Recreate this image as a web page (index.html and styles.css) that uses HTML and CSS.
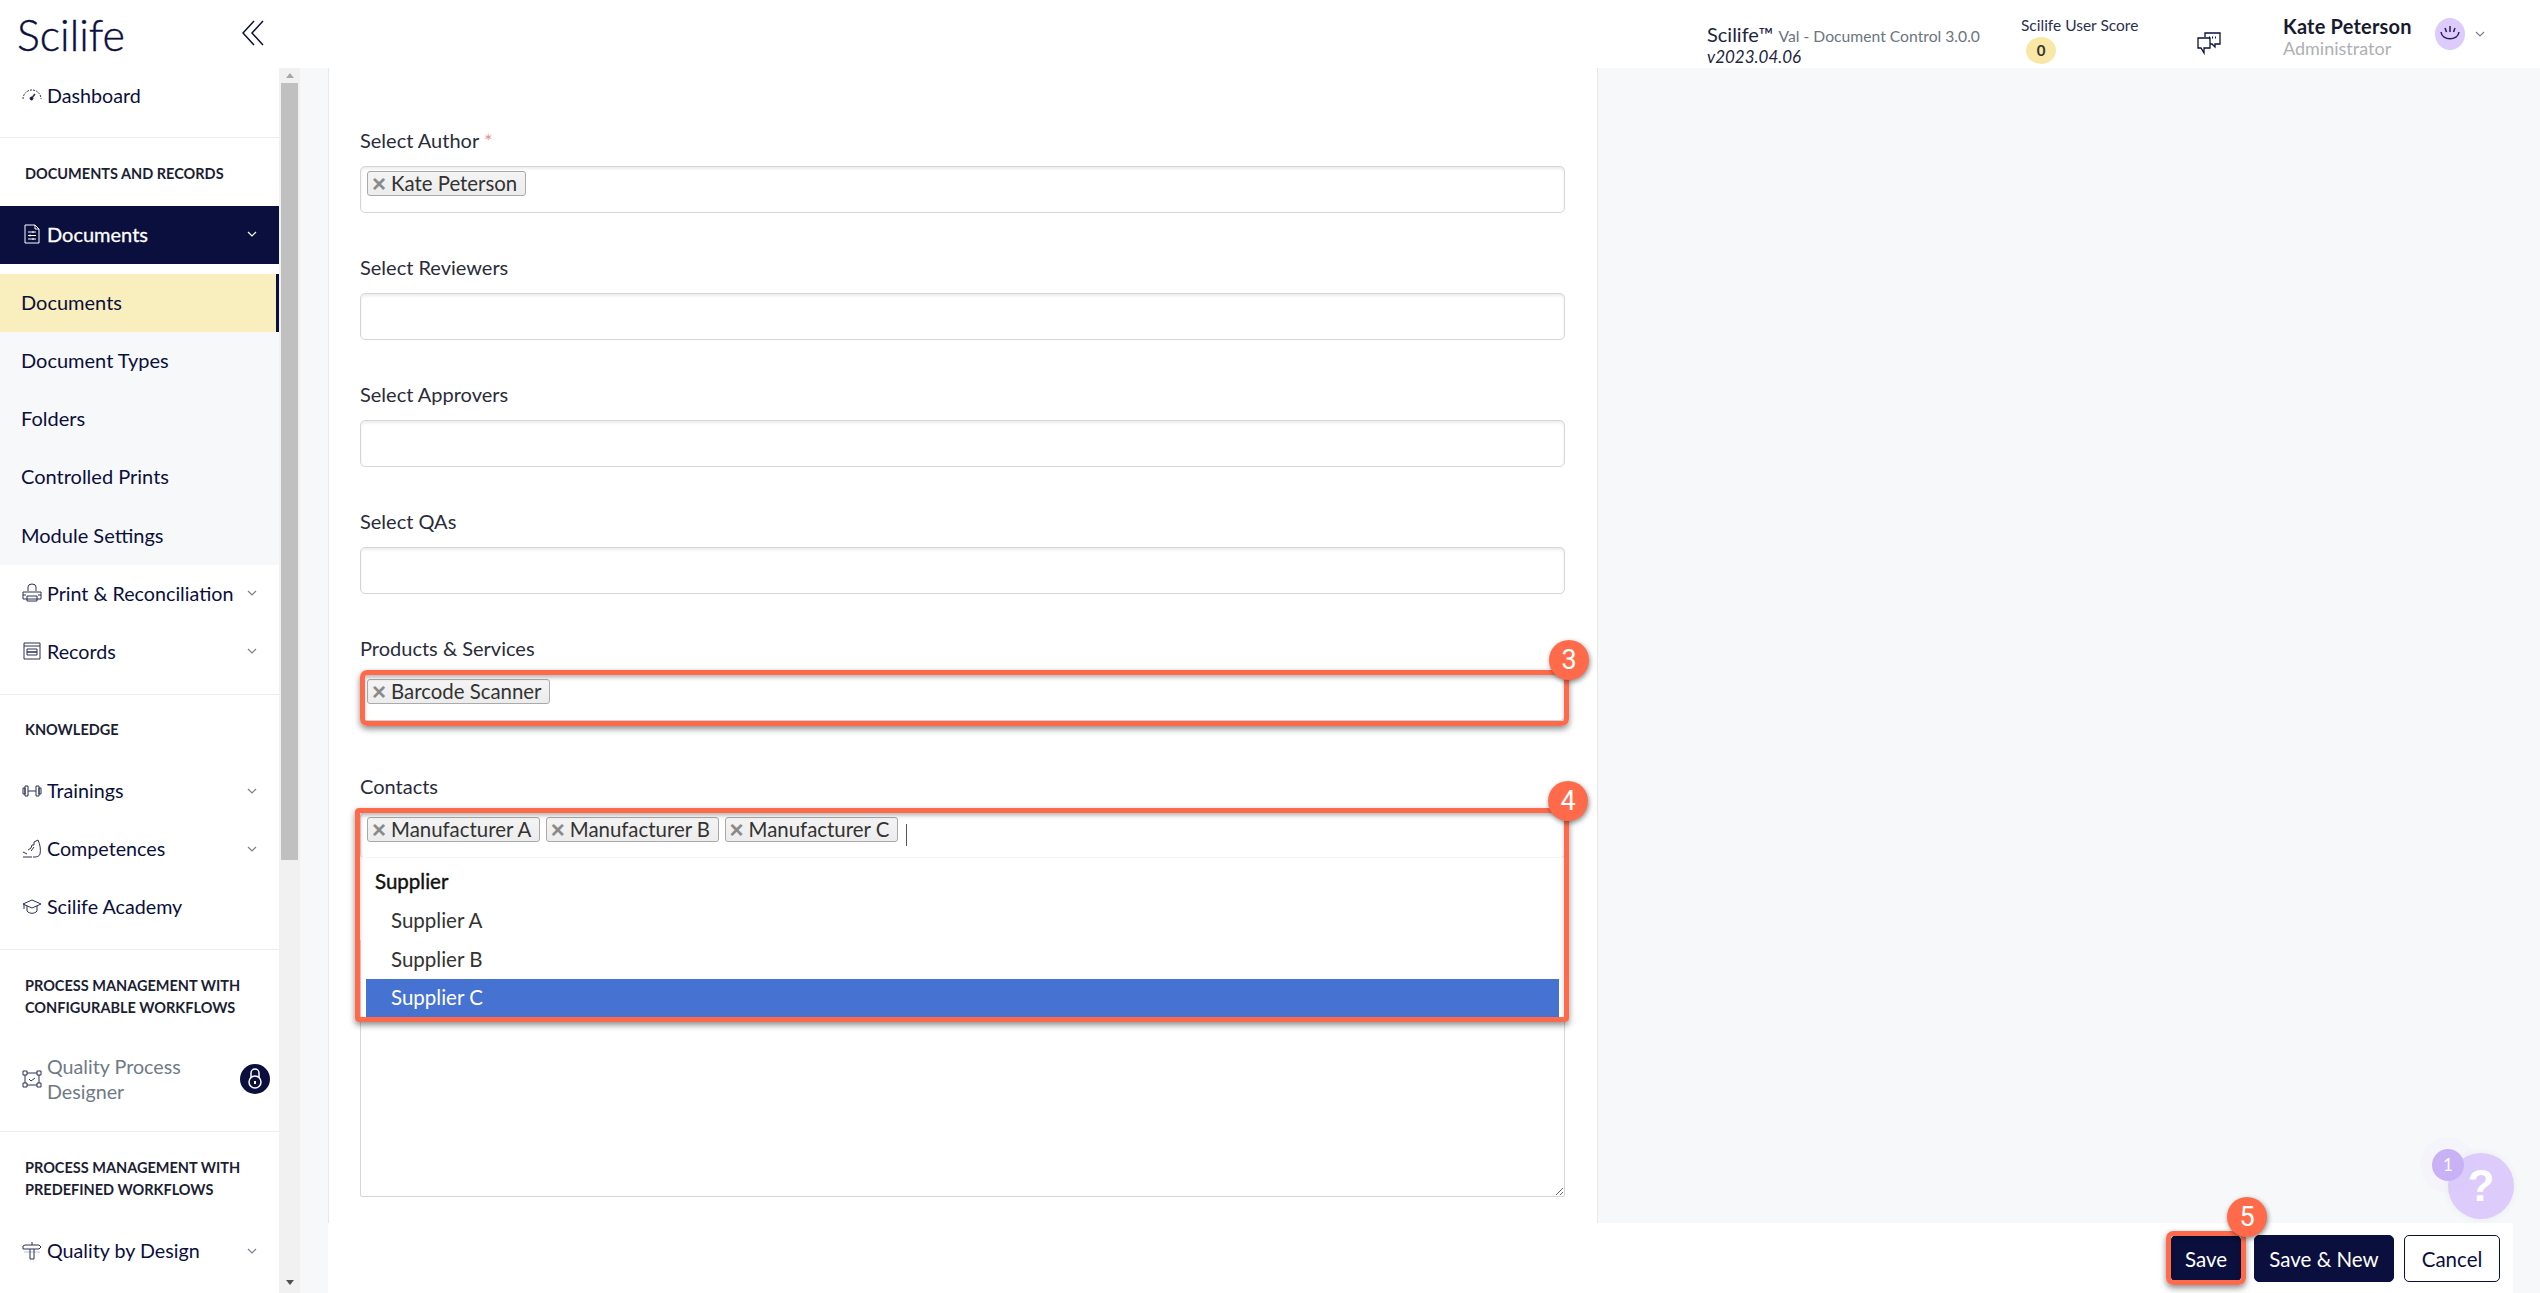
FILE: index.html
```html
<!DOCTYPE html>
<html lang="en">
<head>
<meta charset="utf-8">
<title>Scilife - New Document</title>
<link rel="stylesheet" href="styles.css">
</head>
<body>
<header class="topbar">
  <div class="logo">Scilife</div>
  <svg class="collapse" width="22" height="26" viewBox="0 0 22 26"><path d="M12 1 1 13l11 12M21 1 10 13l11 12"/></svg>
  <div class="top-right">
    <div class="version">
      <div class="version-name">Scilife™ <span class="version-val">Val - Document Control 3.0.0</span></div>
      <div class="version-num">v2023.04.06</div>
    </div>
    <div class="score">
      <div class="score-label">Scilife User Score</div>
      <div class="score-badge">0</div>
    </div>
    <svg class="comment" width="26" height="24" viewBox="0 0 26 24"><path d="M9 6V2h15v11h-5v3l-3-3h-2"/><path d="M2 7h12v10H8v5l-3-5H2z"/><path class="dots" d="M13 6.500h1M16 6.500h1M19 6.500h1"/></svg>
    <div class="user">
      <div class="user-name">Kate Peterson</div>
      <div class="user-role">Administrator</div>
    </div>
    <svg class="avatar" width="30" height="32" viewBox="0 0 30 32"><ellipse cx="15" cy="16" rx="15" ry="16" fill="#dccbfb"/><path d="M6 14c1 9 17 9 18 0M15 8v6M10 10l1.500 4M20 10l-1.500 4" fill="none" stroke="#2a1f5c" stroke-width="1.500"/></svg>
    <svg class="chev user-chev" width="10" height="6" viewBox="0 0 10 6"><path d="m1 1 4 4 4-4"/></svg>
  </div>
</header>

<div class="shell">
  <aside class="sidebar">
    <nav class="nav">
      <section class="nav-group nav-first">
        <a class="nav-item"><svg class="ico" viewBox="0 0 20 20"><path stroke-dasharray="2 1" d="M1 14a9 9 0 0 1 18 0"/><path d="m9 14 4-5" stroke-width="1.500"/><circle cx="9.500" cy="13.500" r="1.500" fill="#0b0f3c"/></svg><span>Dashboard</span></a>
      </section>
      <section class="nav-group">
        <h3 class="nav-label">DOCUMENTS AND RECORDS</h3>
        <a class="nav-item nav-active"><svg class="ico ico-white" viewBox="0 0 20 20"><path d="M3 1h10l4 4v14H3zM13 1v4h4M6 8h8M6 11.500h8M6 15h8M11 7v2M8 10.500v2M11 14v2"/></svg><span class="grow">Documents</span><svg class="chev chev-white" width="10" height="6" viewBox="0 0 10 6"><path d="m1 1 4 4 4-4"/></svg></a>
        <div class="subnav">
          <a class="sub-item sub-current">Documents</a>
          <a class="sub-item">Document Types</a>
          <a class="sub-item">Folders</a>
          <a class="sub-item">Controlled Prints</a>
          <a class="sub-item sub-last">Module Settings</a>
        </div>
        <a class="nav-item"><svg class="ico" viewBox="0 0 20 20"><path d="M6 8V4a4 3 0 0 1 8 0v4M1 9h18v7H1zM5 13h10v5H5zM1 12h3M16 12h3"/></svg><span class="grow">Print &amp; Reconciliation</span><svg class="chev" width="10" height="6" viewBox="0 0 10 6"><path d="m1 1 4 4 4-4"/></svg></a>
        <a class="nav-item"><svg class="ico" viewBox="0 0 20 20"><path d="M2 2h16v16H2zM2 5h16M5 8h10v3H5zM5 11h10v3H5z"/></svg><span class="grow">Records</span><svg class="chev" width="10" height="6" viewBox="0 0 10 6"><path d="m1 1 4 4 4-4"/></svg></a>
      </section>
      <section class="nav-group">
        <h3 class="nav-label">KNOWLEDGE</h3>
        <a class="nav-item"><svg class="ico" viewBox="0 0 20 20"><path d="M1 7h2v6H1zM3 5h3v10H3zM14 5h3v10h-3zM17 7h2v6h-2zM6 10h8"/></svg><span class="grow">Trainings</span><svg class="chev" width="10" height="6" viewBox="0 0 10 6"><path d="m1 1 4 4 4-4"/></svg></a>
        <a class="nav-item"><svg class="ico" viewBox="0 0 20 20"><path d="M12 3l4-2c2 4 3 10 2 14-1 3-4 3-7 3M12 3v3h-2l-1 3-3 2M12 8l-3 4M1 18h9M1 13l4 2"/></svg><span class="grow">Competences</span><svg class="chev" width="10" height="6" viewBox="0 0 10 6"><path d="m1 1 4 4 4-4"/></svg></a>
        <a class="nav-item"><svg class="ico" viewBox="0 0 20 20"><path d="M10 3 1 7l9 4 9-4zM5 9v5c2 3 8 3 10 0V9M2 7v5"/></svg><span class="grow">Scilife Academy</span></a>
      </section>
      <section class="nav-group">
        <h3 class="nav-label">PROCESS MANAGEMENT WITH CONFIGURABLE WORKFLOWS</h3>
        <a class="nav-item nav-tall"><svg class="ico" viewBox="0 0 20 20"><path d="M1 2h4v4H1zM15 2h4v4h-4zM1 14h4v4H1zM15 14h4v4h-4zM5 4h10M5 16h10M3 6v8M17 6v8M7 10l2 2 4-3"/></svg><span class="nav-muted">Quality Process Designer</span><span class="lock"><svg width="14" height="22" viewBox="0 0 14 22"><path d="M3 10V5a4 4 0 0 1 8 0v5"/><circle cx="7" cy="14" r="6"/><path d="M7 13v3" stroke-width="2"/></svg></span></a>
      </section>
      <section class="nav-group nav-end">
        <h3 class="nav-label">PROCESS MANAGEMENT WITH PREDEFINED WORKFLOWS</h3>
        <a class="nav-item"><svg class="ico" viewBox="0 0 20 20"><path d="M10 1v3M3 4h14l2 2-2 2H1V5zM8 8v10h4V8"/><path d="M2 11h16" stroke-opacity=".3"/></svg><span class="grow">Quality by Design</span><svg class="chev" width="10" height="6" viewBox="0 0 10 6"><path d="m1 1 4 4 4-4"/></svg></a>
      </section>
    </nav>
    <div class="scrollbar">
      <div class="arrow-up"></div>
      <div class="thumb"></div>
      <div class="arrow-down"></div>
    </div>
  </aside>

  <div class="content">
    <div class="work">
      <main class="form">
        <div class="field">
          <label class="field-label">Select Author <span class="req">*</span></label>
          <div class="select"><span class="chip"><b class="chip-x">×</b>Kate Peterson</span></div>
        </div>
        <div class="field">
          <label class="field-label">Select Reviewers</label>
          <div class="select"></div>
        </div>
        <div class="field">
          <label class="field-label">Select Approvers</label>
          <div class="select"></div>
        </div>
        <div class="field">
          <label class="field-label">Select QAs</label>
          <div class="select"></div>
        </div>
        <div class="field field-products">
          <label class="field-label">Products &amp; Services</label>
          <div class="select"><span class="chip"><b class="chip-x">×</b>Barcode Scanner</span></div>
          <div class="annot annot-products"></div>
          <div class="step step-3">3</div>
        </div>
        <div class="field field-contacts">
          <label class="field-label">Contacts</label>
          <div class="select">
            <span class="chip"><b class="chip-x">×</b>Manufacturer A</span>
            <span class="chip"><b class="chip-x">×</b>Manufacturer B</span>
            <span class="chip"><b class="chip-x">×</b>Manufacturer C</span>
            <span class="caret"></span>
          </div>
          <ul class="dropdown">
            <li class="opt-group">Supplier</li>
            <li class="opt">Supplier A</li>
            <li class="opt">Supplier B</li>
            <li class="opt opt-active">Supplier C</li>
          </ul>
          <div class="annot annot-contacts"></div>
          <div class="step step-4">4</div>
        </div>
        <textarea class="notes" aria-label="Comments"></textarea>
      </main>
    </div>
    <footer class="actions">
      <div class="save-wrap">
        <button class="btn btn-save">Save</button>
        <div class="annot annot-save"></div>
        <div class="step step-5">5</div>
      </div>
      <button class="btn btn-new">Save &amp; New</button>
      <button class="btn btn-cancel">Cancel</button>
    </footer>
    <div class="help"><span class="help-mark">?</span><span class="help-count">1</span></div>
  </div>
</div>
</body>
</html>
```
FILE: styles.css
```css
* { box-sizing: border-box; }
html, body { margin: 0; height: 100%; overflow: hidden; }
body {
  font-family: "Lato", "Liberation Sans", sans-serif;
  color: #0b0f3c;
  background: #f7f8fa;
  width: 2540px;
  height: 1293px;
}

/* top bar */
.topbar { height: 68px; background: #fff; display: flex; align-items: flex-start; }
.logo { margin: 11px 0 0 17px; width: 225px; font-size: 43px; line-height: 48px; font-weight: 300; -webkit-text-stroke: .4px #0b0f3c; }
.collapse { margin-top: 20px; fill: none; stroke: #0b0f3c; stroke-width: 1.500; }
.top-right { margin-left: auto; width: 833px; display: flex; align-items: flex-start; }
.version { width: 314px; padding-top: 23px; }
.version-name { font-size: 20px; line-height: 22px; color: #22253f; }
.version-val { font-size: 15.700px; color: #6d7480; }
.version-num { font-size: 17px; line-height: 20px; font-style: italic; color: #22253f; }
.score { width: 175px; padding-top: 16px; }
.score-label { font-size: 15.500px; line-height: 18px; color: #2c3050; }
.score-badge { margin: 3px 0 0 5px; width: 30px; height: 27px; border-radius: 50%; background: #f9e7a6; font-size: 15px; font-weight: 700; line-height: 27px; text-align: center; color: #333; }
.comment { margin: 31px 61px 0 0; fill: none; stroke: #0b0f3c; stroke-width: 1.300; flex: none; }
.comment .dots { stroke-width: 2; }
.user { width: 152px; padding-top: 14px; flex: none; }
.user-name { font-size: 20px; line-height: 24px; font-weight: 700; color: #1a1a2e; letter-spacing: .2px; }
.user-role { font-size: 18px; line-height: 20px; color: #aeb0b3; }
.avatar { margin-top: 18px; flex: none; }
.user-chev { margin: 31px 0 0 10px; flex: none; }
.chev { fill: none; stroke: #7a7f8c; stroke-width: 1.200; flex: none; }
.chev-white { stroke: #fff; }

/* layout */
.shell { display: flex; height: 1225px; }

/* sidebar */
.sidebar { width: 300px; flex: none; display: flex; height: 1225px; overflow: hidden; }
.nav { width: 279px; flex: none; background: #fff; }
.nav-group { padding-bottom: 13px; border-bottom: 1px solid #eceef1; }
.nav-end { border-bottom: 0; }
.nav-first .nav-item { height: 56px; padding-bottom: 2px; }
.nav-label { margin: 0; padding: 24.500px 20px 20.500px 25px; font-size: 14.500px; line-height: 22.500px; font-weight: 700; color: #1c1e33; }
.nav-item { height: 58px; display: flex; align-items: center; padding: 0 22px 1px; font-size: 19.700px; color: #0b0f3c; }
.nav-tall { height: 78px; padding-right: 9px; line-height: 25px; }
.nav-muted { color: #6f7a86; max-width: 170px; margin-right: auto; }
.grow { flex: 1; }
.ico { width: 20px; height: 20px; flex: none; margin-right: 5px; fill: none; stroke: #2b2f55; stroke-width: 1; }
.ico-white { stroke: #fff; }
.nav-active { background: #0a0f3d; color: #fff; -webkit-text-stroke: .3px #fff; font-size: 20px; }
.subnav { margin-top: 10px; background: #f7f8fa; height: 291px; }
.sub-item { height: 58px; display: flex; align-items: center; padding: 0 0 1px 21px; font-size: 20px; color: #0b0f3c; }
.sub-current { background: #f9eebd; border-right: 3px solid #0a0f3d; }
.sub-last { padding-top: 1px; }
.lock { width: 30px; height: 30px; flex: none; border-radius: 50%; background: #0a0f3d; display: flex; align-items: center; justify-content: center; }
.lock svg { fill: none; stroke: #fff; stroke-width: 1.500; }

.scrollbar { width: 21px; flex: none; background: #f1f1f1; display: flex; flex-direction: column; align-items: center; }
.arrow-up { margin: 5px 0 5px; width: 0; height: 0; border: 4.500px solid transparent; border-top: 0; border-bottom: 5px solid #a8a8a8; flex: none; }
.thumb { width: 17px; height: 777px; background: #c0c0c0; flex: none; }
.arrow-down { margin-top: auto; margin-bottom: 8px; width: 0; height: 0; border: 4.500px solid transparent; border-bottom: 0; border-top: 5px solid #505050; flex: none; }

/* content */
.content { flex: 1; position: relative; display: flex; flex-direction: column; min-width: 0; padding-left: 28px; }
.work { height: 1155px; display: flex; }
.form { width: 1270px; background: #fff; border-left: 1px solid #e7e8ea; border-right: 1px solid #e7e8ea; padding: 61px 31px 0 31px; }
.field { position: relative; margin-bottom: 43px; }
.field-label { display: block; font-size: 20px; line-height: 22px; margin-bottom: 15px; color: #2a2c3a; }
.req { color: #f68a8a; }
.select { height: 47px; width: 1205px; background: #fff; border: 1px solid #d3d6dc; border-radius: 5px; box-shadow: inset 0 2px 3px rgba(0, 0, 0, .08); padding: 4px 6px; display: flex; align-items: flex-start; gap: 6px; }
.chip { height: 25px; display: inline-flex; align-items: center; padding: 0 7.500px 2px 4px; border: 1px solid #aaa; border-radius: 3px; background: linear-gradient(#f4f4f4, #ececec); font-size: 20.400px; color: #333; }
.chip-x { width: 19px; padding: 2px 5px 0 0; font: 700 24px/20px "Liberation Sans", sans-serif; color: #8a8a8a; text-align: center; }
.caret { width: 1px; height: 22px; margin: 7px 0 0 2px; background: #555; }
.field-products { margin-bottom: 54px; }
.field-contacts { margin-bottom: 80px; }

.dropdown { position: absolute; left: 1px; top: 82px; width: 1203px; height: 160px; margin: 0; padding: 5px 5px 0; list-style: none; background: #fff; border-top: 1px solid #f6f6f6; }
.opt-group, .opt { height: 38.700px; display: flex; align-items: center; font-size: 20.500px; color: #333; padding-left: 9px; padding-bottom: 2px; }
.opt-group { color: #111; -webkit-text-stroke: .4px #111; }
.opt { padding-left: 25px; }
.opt-active { background: #4672d2; color: #fff; }

.notes { display: block; width: 1205px; height: 258px; margin: 0; border: 1px solid #d3d6dc; border-radius: 2px; background: #fff; resize: vertical; }

/* annotations */
.annot { position: absolute; border: 5px solid #ff6b4a; box-shadow: 0 3px 6px rgba(0, 0, 0, .45), inset 0 3px 4px rgba(0, 0, 0, .2); pointer-events: none; }
.annot-products { left: 0; right: -3px; top: 33px; bottom: -5px; border-radius: 7px; }
.annot-contacts { left: -5px; right: -3px; top: 33px; height: 214px; border-radius: 4px; }
.annot-save { inset: -4px -5px -3px -5px; border-radius: 7px; }
.step { position: absolute; width: 40px; height: 40px; border-radius: 50%; background: #ff6b4a; color: #fff; box-shadow: 1px 2px 5px rgba(0, 0, 0, .45); font-family: "Roboto", sans-serif; font-size: 27px; line-height: 40px; text-align: center; z-index: 2; }
.step-3 { right: -23px; top: 3px; }
.step-4 { right: -22px; top: 6px; }
.step-5 { left: 56px; top: -38px; }

/* footer */
.actions { height: 70px; margin-right: 27px; background: #fff; display: flex; justify-content: flex-end; align-items: flex-start; padding: 12px 13px 0 0; gap: 10px; }
.btn { height: 47px; border-radius: 5px; border: 1px solid #0a0f3d; background: #0a0f3d; color: #fff; font: 20.500px "Lato", sans-serif; padding: 0; }
.save-wrap { position: relative; width: 70px; height: 47px; margin-right: 3px; }
.btn-save { width: 70px; }
.btn-new { width: 140px; }
.btn-cancel { width: 96px; background: #fff; color: #0a0f3d; }

/* help */
.help { position: absolute; right: 26px; bottom: 74px; width: 66px; height: 66px; border-radius: 50%; background: #dccbfb; box-shadow: 0 0 8px rgba(0, 0, 0, .06); display: flex; align-items: center; justify-content: center; }
.help-mark { color: #fff; font: 700 44px/66px "Liberation Sans", sans-serif; }
.help-count { position: absolute; left: -16px; top: -4px; width: 32px; height: 32px; border-radius: 50%; background: #c8b1f5; color: #fff; font-size: 17px; line-height: 32px; text-align: center; box-shadow: 0 0 0 12px rgba(220, 203, 251, .08); }
```
